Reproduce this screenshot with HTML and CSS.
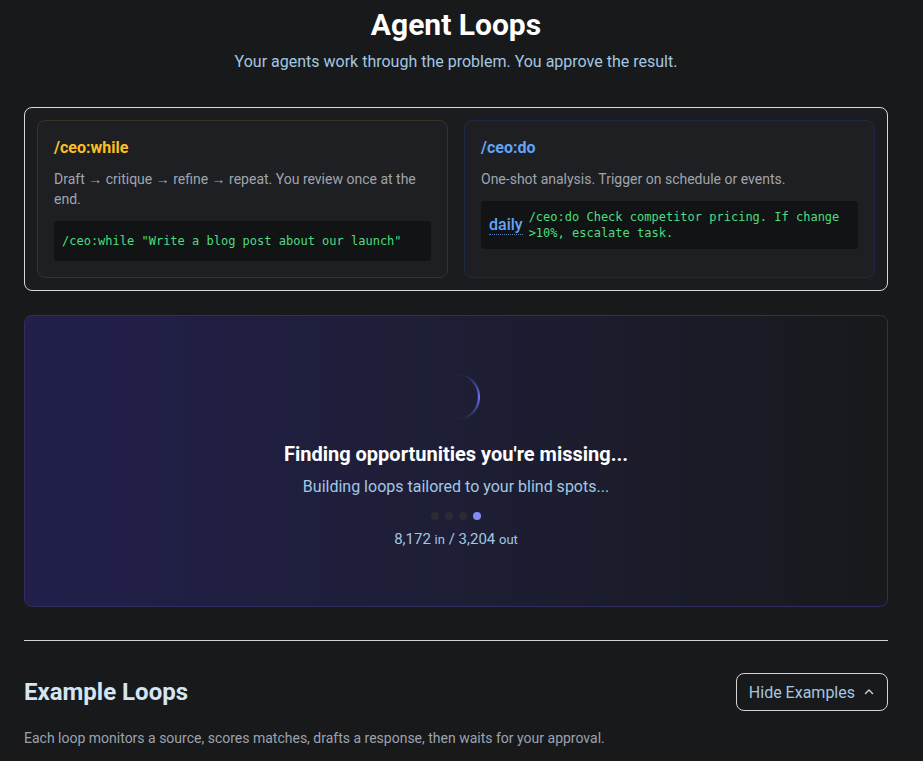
FILE: index.html
```html
<!DOCTYPE html>
<html lang="en">
<head>
<meta charset="utf-8">
<title>Agent Loops</title>
<link rel="stylesheet" href="styles.css">
</head>
<body>
<main class="page">
  <header class="hero">
    <h1 class="hero-title">Agent Loops</h1>
    <p class="hero-sub">Your agents work through the problem. You approve the result.</p>
  </header>

  <section class="modes">
    <article class="mode mode-while">
      <h2 class="mode-title">/ceo:while</h2>
      <p class="mode-desc">Draft → critique → refine → repeat. You review once at the end.</p>
      <div class="code code-while">/ceo:while "Write a blog post about our launch"</div>
    </article>
    <article class="mode mode-do">
      <h2 class="mode-title">/ceo:do</h2>
      <p class="mode-desc">One-shot analysis. Trigger on schedule or events.</p>
      <div class="code code-do">
        <span class="trigger">daily</span>
        <span class="code-text">/ceo:do Check competitor pricing. If change &gt;10%, escalate task.</span>
      </div>
    </article>
  </section>

  <section class="loading">
    <svg class="spinner" width="48" height="48" viewBox="0 0 48 48">
      <defs>
        <linearGradient id="arc" x1="0" y1="0" x2="0" y2="1">
          <stop offset="0" stop-color="#6366f1" stop-opacity="0"/>
          <stop offset="0.5" stop-color="#6d70f5" stop-opacity="1"/>
          <stop offset="1" stop-color="#6366f1" stop-opacity="0"/>
        </linearGradient>
      </defs>
      <path d="M24 1 A23 23 0 0 1 24 47" fill="none" stroke="url(#arc)" stroke-width="2.2"/>
    </svg>
    <h3 class="loading-title">Finding opportunities you're missing...</h3>
    <p class="loading-sub">Building loops tailored to your blind spots...</p>
    <div class="dots">
      <span class="dot"></span><span class="dot"></span><span class="dot"></span><span class="dot dot-on"></span>
    </div>
    <p class="tokens">8,172 <span class="unit">in</span> / 3,204 <span class="unit">out</span></p>
  </section>

  <hr class="divider">

  <section class="examples">
    <div class="examples-head">
      <h2 class="examples-title">Example Loops</h2>
      <button class="toggle">Hide Examples
        <svg class="chev" width="12" height="12" viewBox="0 0 12 12"><path d="M2.5 7.5 L6 4 L9.5 7.5" fill="none" stroke="currentColor" stroke-width="1.4" stroke-linecap="round" stroke-linejoin="round"/></svg>
      </button>
    </div>
    <p class="examples-desc">Each loop monitors a source, scores matches, drafts a response, then waits for your approval.</p>
  </section>
</main>
</body>
</html>
```

FILE: styles.css
```css
* { box-sizing: border-box; }
html, body { margin: 0; padding: 0; }
body {
  background: #18191b;
  color: #e5e7eb;
  font-family: Roboto, "Noto Sans", "Liberation Sans", sans-serif;
}
.page {
  width: 864px;
  margin-left: 24px;
  padding-top: 7px;
}
.hero { text-align: center; }
.hero-title {
  margin: 0;
  font-size: 30px;
  line-height: 36px;
  font-weight: 700;
  color: #ffffff;
}
.hero-sub {
  margin: 8px 0 0;
  font-size: 16px;
  line-height: 22px;
  color: #a3c7e2;
}
.modes {
  margin-top: 34px;
  border: 1px solid #d9d9d9;
  border-radius: 8px;
  background: #1b1c1f;
  padding: 12px;
  display: grid;
  grid-template-columns: 1fr 1fr;
  gap: 16px;
}
.mode {
  background: #1e1f23;
  border: 1px solid #3a3324;
  border-radius: 8px;
  padding: 15px 16px 16px;
  min-height: 158px;
}
.mode-do { border-color: #1e2a44; }
.mode-title {
  margin: 0;
  font-size: 16px;
  line-height: 24px;
  font-weight: 700;
}
.mode-while .mode-title { color: #fbbf24; }
.mode-do .mode-title { color: #60a5fa; }
.mode-desc {
  margin: 9px 0 0;
  font-size: 14px;
  line-height: 20px;
  color: #a0a5ad;
}
.code {
  margin-top: 12px;
  background: #121315;
  border-radius: 4px;
  font-family: "DejaVu Sans Mono", "Liberation Mono", monospace;
  font-size: 12px;
  line-height: 16px;
  color: #4ade80;
}
.code-while { padding: 12px 8px; }
.code-do {
  padding: 8px;
  display: flex;
  align-items: center;
  gap: 6px;
}
.trigger {
  font-family: Roboto, "Noto Sans", sans-serif;
  font-size: 16px;
  font-weight: 500;
  color: #60a5fa;
  line-height: 18px;
  border-bottom: 1px dotted #5a7fb5;
  flex: none;
}
.code-text { flex: 1; }
.loading {
  margin-top: 24px;
  height: 292px;
  border: 1px solid #2f2f62;
  border-radius: 8px;
  background: linear-gradient(90deg, #211f4b 0%, #1e1e38 45%, #18191c 100%);
  display: flex;
  flex-direction: column;
  align-items: center;
  justify-content: center;
}
.spinner { display: block; }
.loading-title {
  margin: 20px 0 0;
  font-size: 20px;
  line-height: 26px;
  font-weight: 700;
  color: #ffffff;
}
.loading-sub {
  margin: 9px 0 0;
  font-size: 16px;
  line-height: 22px;
  color: #a3c7e2;
}
.dots {
  margin-top: 14px;
  display: flex;
  gap: 6px;
}
.dot {
  width: 8px;
  height: 8px;
  border-radius: 50%;
  background: #2a2b33;
}
.dot-on { background: #818cf8; }
.tokens {
  margin: 9px 0 0;
  font-size: 15px;
  line-height: 20px;
  color: #a3c7e2;
}
.unit { font-size: 13px; }
.divider {
  margin: 33px 0 0;
  border: 0;
  border-top: 1px solid #d4d4d4;
}
.examples { padding-top: 32px; }
.examples-head {
  display: flex;
  justify-content: space-between;
  align-items: center;
}
.examples-title {
  margin: 0;
  font-size: 24px;
  line-height: 30px;
  font-weight: 700;
  color: #d4e5f3;
}
.toggle {
  display: flex;
  align-items: center;
  gap: 8px;
  height: 38px;
  padding: 0 12px;
  background: transparent;
  border: 1px solid #d4d4d4;
  border-radius: 8px;
  font-family: Roboto, "Noto Sans", sans-serif;
  font-size: 16px;
  color: #a3c7e2;
}
.chev { color: #c4d6e6; }
.examples-desc {
  margin: 17px 0 0;
  font-size: 14px;
  line-height: 20px;
  color: #9ca3af;
}
```
